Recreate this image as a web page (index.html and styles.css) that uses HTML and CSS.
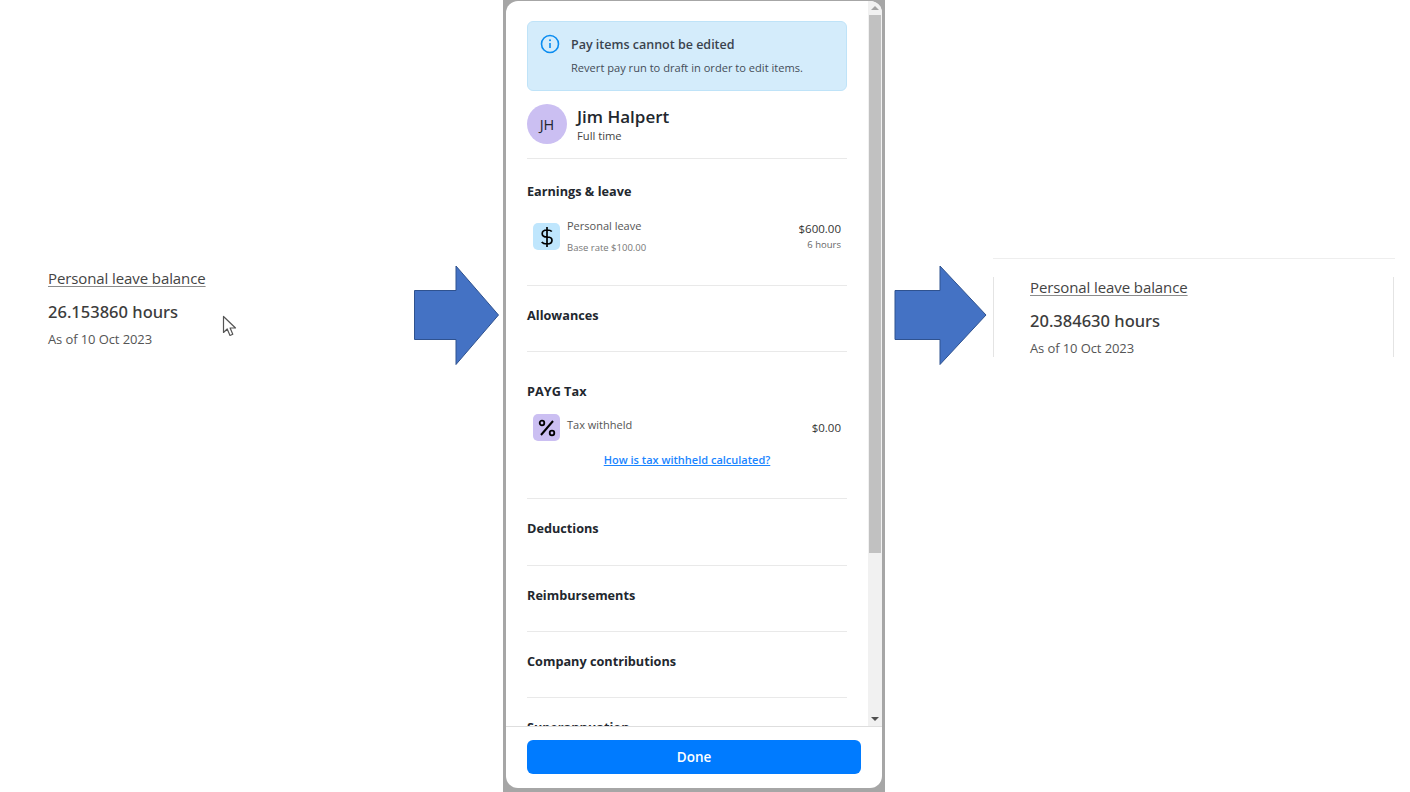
FILE: index.html
```html
<!DOCTYPE html>
<html lang="en">

<head>
    <meta charset="UTF-8">
    <meta name="viewport" content="width=device-width, initial-scale=1.0">
    <title>Personal leave balance</title>
    <link rel="stylesheet" href="styles.css">
</head>

<body>
    <div class="page">

        <!-- before -->
        <div class="side side-left">
            <div class="balance">
                <a class="balance-title">Personal leave balance</a>
                <div class="balance-value">26.153860 hours</div>
                <div class="balance-date">As of 10 Oct 2023</div>
                <svg class="cursor" width="16" height="22" viewBox="0 0 16 22">
                    <path d="M1.5 1.5V17.5L5.2 14L8 20.5L10.8 19.3L8.1 13H13.5Z" fill="#fff" stroke="#555" stroke-width="1.2" stroke-linejoin="round" />
                </svg>
            </div>
            <svg class="arrow" width="87" height="101" viewBox="0 0 87 101">
                <path d="M1.500 25.500H43V1L85.500 50L43 99.500V74.500H1.500Z" fill="#4472c4" stroke="#2f528f" />
            </svg>
        </div>

        <!-- modal -->
        <div class="modal-frame">
            <div class="modal">
                <div class="modal-main">
                    <div class="modal-scroll">
                        <div class="alert">
                            <svg class="alert-icon" width="20" height="20" viewBox="0 0 20 20">
                                <circle cx="10" cy="10" r="8.500" fill="none" stroke="#0a8cf0" stroke-width="1.600" />
                                <path d="M10 9V14" stroke="#0a8cf0" stroke-width="1.600" />
                                <circle cx="10" cy="6.300" r="1" fill="#0a8cf0" />
                            </svg>
                            <div>
                                <div class="alert-title">Pay items cannot be edited</div>
                                <div class="alert-text">Revert pay run to draft in order to edit items.</div>
                            </div>
                        </div>

                        <div class="person">
                            <div class="avatar">JH</div>
                            <div class="person-info">
                                <div class="person-name">Jim Halpert</div>
                                <div class="person-type">Full time</div>
                            </div>
                        </div>

                        <div class="section section-earnings">
                            <h3>Earnings &amp; leave</h3>
                            <div class="item">
                                <div class="item-icon icon-blue">
                                    <svg width="18" height="22" viewBox="0 0 18 22">
                                        <path d="M9 1V21M13.800 5.500C12.800 4.300 11.500 4 9 4C6.200 4 4.200 5.300 4.200 7.700C4.200 10.200 6.200 11 9 11C11.800 11 14 11.800 14 14.300C14 16.800 11.800 18 9 18C6.700 18 4.800 17.500 3.700 16" fill="none" stroke="#000" stroke-width="1.700" />
                                    </svg>
                                </div>
                                <div class="item-text">
                                    <div class="item-name">Personal leave</div>
                                    <div class="item-note">Base rate $100.00</div>
                                </div>
                                <div class="item-amount">
                                    <div>$600.00</div>
                                    <div class="item-hours">6 hours</div>
                                </div>
                            </div>
                        </div>

                        <div class="section">
                            <h3>Allowances</h3>
                        </div>

                        <div class="section section-tax">
                            <h3>PAYG Tax</h3>
                            <div class="item item-tax">
                                <div class="item-icon icon-purple">
                                    <svg width="18" height="18" viewBox="0 0 18 18">
                                        <path d="M15 2L3 16" stroke="#000" stroke-width="2" />
                                        <circle cx="4" cy="4" r="2.300" fill="none" stroke="#000" stroke-width="1.800" />
                                        <circle cx="14" cy="14" r="2.300" fill="none" stroke="#000" stroke-width="1.800" />
                                    </svg>
                                </div>
                                <div class="item-text">
                                    <div class="item-name">Tax withheld</div>
                                </div>
                                <div class="item-amount">$0.00</div>
                            </div>
                            <a class="tax-link">How is tax withheld calculated?</a>
                        </div>

                        <div class="section section-deductions">
                            <h3>Deductions</h3>
                        </div>
                        <div class="section">
                            <h3>Reimbursements</h3>
                        </div>
                        <div class="section">
                            <h3>Company contributions</h3>
                        </div>
                        <div class="section">
                            <h3>Superannuation</h3>
                        </div>
                    </div>

                    <div class="scrollbar">
                        <div class="scroll-btn"><span class="tri-up"></span></div>
                        <div class="scroll-thumb"></div>
                        <div class="scroll-track"></div>
                        <div class="scroll-btn"><span class="tri-down"></span></div>
                    </div>
                </div>

                <div class="modal-footer">
                    <button class="done-btn">Done</button>
                </div>
            </div>
        </div>

        <!-- after -->
        <div class="side side-right">
            <svg class="arrow" width="93" height="101" viewBox="0 0 93 101">
                <path d="M1 25.500H46V1L92 50L46 99.500V74.500H1Z" fill="#4472c4" stroke="#2f528f" />
            </svg>
            <div class="after">
                <div class="after-line"></div>
                <div class="after-box">
                    <a class="balance-title">Personal leave balance</a>
                    <div class="balance-value">20.384630 hours</div>
                    <div class="balance-date">As of 10 Oct 2023</div>
                </div>
            </div>
        </div>

    </div>
</body>

</html>
```

FILE: styles.css
```css
* {
    box-sizing: border-box;
}

body {
    margin: 0;
    background-color: #fff;
    font-family: "Open Sans", "Noto Sans", "Liberation Sans", sans-serif;
    color: #22272e;
}

.page {
    display: flex;
    height: 792px;
    overflow: hidden;
}

/* left and right parts */
.side {
    display: flex;
}

.side-left {
    width: 503px;
    padding: 265px 3px 0 48px;
    justify-content: space-between;
    align-items: flex-start;
}

.side-right {
    flex: 1;
    padding: 265px 0 0 9px;
    align-items: flex-start;
}

.arrow {
    flex: none;
    display: block;
}

.balance {
    position: relative;
    width: 200px;
    padding-top: 3px;
}

.balance-title {
    display: block;
    width: fit-content;
    font-size: 15px;
    line-height: 20px;
    font-weight: 500;
    color: #444;
    letter-spacing: -0.1px;
    text-decoration: underline;
    text-decoration-color: #8c8c8c;
    text-underline-offset: 2px;
}

.balance-value {
    margin-top: 13px;
    font-family: "Noto Sans", "Open Sans", sans-serif;
    font-size: 16.500px;
    line-height: 22px;
    font-weight: 500;
    color: #3c3c3c;
}

.balance-date {
    margin-top: 7px;
    font-size: 13px;
    line-height: 18px;
    color: #555;
    letter-spacing: -0.1px;
}

.cursor {
    position: absolute;
    left: 174px;
    top: 50px;
}

.after {
    margin: -7px 0 0 6px;
    width: 402px;
}

.after-line {
    height: 1px;
    background-color: #eee;
}

.after-box {
    margin-top: 18px;
    width: 401px;
    height: 80px;
    padding: 0 0 0 36px;
    border-left: 1px solid #e4e4e4;
    border-right: 1px solid #e4e4e4;
}

/* modal */
.modal-frame {
    width: 382px;
    padding: 1px 3px 4px;
    background-color: #a6a6a6;
}

.modal {
    display: flex;
    flex-direction: column;
    height: 787px;
    background-color: #fff;
    border-radius: 12px;
    overflow: hidden;
}

.modal-main {
    flex: 1;
    display: flex;
    min-height: 0;
}

.modal-scroll {
    flex: 1;
    padding: 20px 21px 0;
    overflow: hidden;
}

.scrollbar {
    width: 14px;
    display: flex;
    flex-direction: column;
    background-color: #f1f1f1;
    padding: 0 1px;
}

.scroll-btn {
    height: 14px;
    display: flex;
    align-items: center;
    justify-content: center;
}

.tri-up {
    border-left: 4px solid transparent;
    border-right: 4px solid transparent;
    border-bottom: 4px solid #a3a3a3;
}

.tri-down {
    border-left: 4px solid transparent;
    border-right: 4px solid transparent;
    border-top: 4px solid #505050;
}

.scroll-thumb {
    height: 538px;
    background-color: #c1c1c1;
}

.scroll-track {
    flex: 1;
}

.alert {
    display: flex;
    gap: 11px;
    height: 70px;
    padding: 13px 12px 0;
    background-color: #d4ecfb;
    border: 1px solid #bfe3f8;
    border-radius: 6px;
}

.alert-icon {
    flex: none;
    margin-top: -1px;
}

.alert-title {
    font-size: 12.500px;
    line-height: 20px;
    font-weight: 600;
    color: #3a434e;
}

.alert-text {
    margin-top: 5px;
    font-size: 11.100px;
    line-height: 16px;
    color: #444d58;
}

.person {
    display: flex;
    align-items: center;
    gap: 10px;
    height: 68px;
    padding-top: 13px;
    padding-bottom: 14px;
    border-bottom: 1px solid #e9e9e9;
}

.person-info {
    padding-top: 2px;
}

.avatar {
    flex: none;
    width: 40px;
    height: 40px;
    border-radius: 50%;
    background-color: #cbbff2;
    display: flex;
    align-items: center;
    justify-content: center;
    font-size: 14.500px;
}

.person-name {
    font-size: 17px;
    line-height: 22px;
    font-weight: 600;
}

.person-type {
    font-size: 11.200px;
    line-height: 16px;
    color: #444;
}

.section {
    height: 66px;
    padding-top: 19px;
    border-bottom: 1px solid #e9e9e9;
}

.section-earnings {
    height: 127px;
    padding-top: 22px;
}

.section-tax {
    height: 147px;
    padding-top: 29px;
}

.section-deductions {
    height: 67px;
}

h3 {
    margin: 0;
    font-size: 12.700px;
    line-height: 20px;
    font-weight: 700;
    color: #22272e;
}

.item {
    display: flex;
    margin-top: 22px;
    padding: 0 6px;
}

.item-tax {
    margin-top: 13px;
}

.item-icon {
    flex: none;
    width: 27px;
    height: 27px;
    border-radius: 5px;
    display: flex;
    align-items: center;
    justify-content: center;
}

.icon-blue {
    background-color: #bfe6fd;
}

.icon-purple {
    background-color: #cbbff2;
}

.item-text {
    flex: 1;
    margin-left: 7px;
    margin-top: -5px;
}

.item-tax .item-text {
    margin-top: 3px;
}

.item-name {
    font-size: 11px;
    line-height: 16px;
    color: #555;
}

.item-note {
    margin-top: 7px;
    font-size: 9.500px;
    line-height: 14px;
    color: #777;
}

.item-amount {
    margin-top: -2px;
    text-align: right;
    font-size: 11.500px;
    line-height: 16px;
    color: #333;
}

.item-tax .item-amount {
    margin-top: 0;
    line-height: 27px;
}

.item-hours {
    font-size: 9.500px;
    color: #666;
}

.tax-link {
    display: block;
    margin-top: 11px;
    text-align: center;
    font-size: 11px;
    line-height: 16px;
    font-weight: 600;
    color: #1a85ff;
    text-decoration: underline;
}

.modal-footer {
    flex: none;
    height: 62px;
    padding: 13px 21px 0;
    border-top: 1px solid #dedede;
}

.done-btn {
    display: block;
    width: 334px;
    height: 34px;
    border: none;
    border-radius: 6px;
    background-color: #007bff;
    color: #fff;
    font-family: inherit;
    font-size: 13.500px;
    font-weight: 600;
}
```
